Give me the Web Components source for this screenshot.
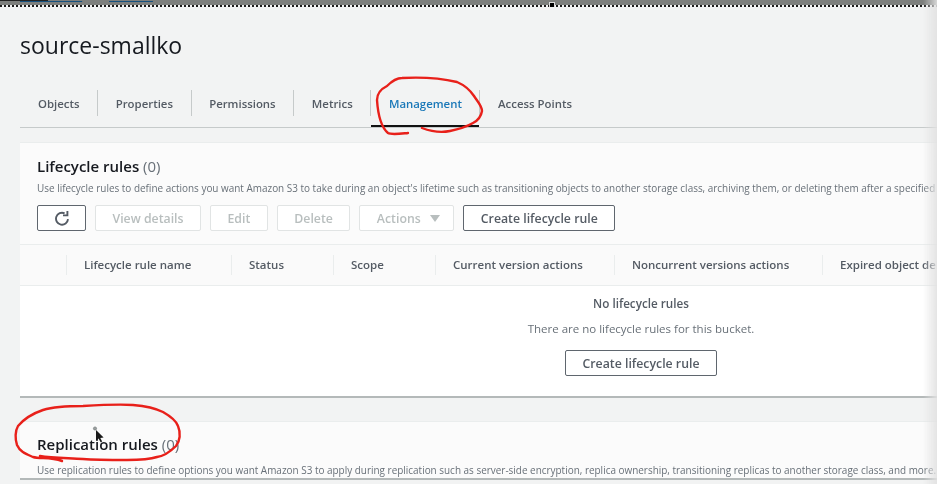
<!DOCTYPE html>
<html>
<head>
<meta charset="utf-8">
<title>source-smallko</title>
<style>
  html, body { margin: 0; height: 100%; overflow: hidden; background: #f2f3f3; }
  body { font-family: "Open Sans", "Noto Sans", sans-serif; color: #16191f; }
</style>
</head>
<body>
<s3-console>
  <top-strip></top-strip>
  <page-title>source-smallko</page-title>
  <s3-tabs items="Objects,Properties,Permissions,Metrics,Management,Access Points" active="Management"></s3-tabs>

  <s3-card heading="Lifecycle rules" count="(0)" description="Use lifecycle rules to define actions you want Amazon S3 to take during an object's lifetime such as transitioning objects to another storage class, archiving them, or deleting them after a specified period of time.">
    <s3-toolbar>
      <s3-button icon="refresh"></s3-button>
      <s3-button disabled>View details</s3-button>
      <s3-button disabled>Edit</s3-button>
      <s3-button disabled>Delete</s3-button>
      <s3-button disabled caret>Actions</s3-button>
      <s3-button>Create lifecycle rule</s3-button>
    </s3-toolbar>
    <table-head></table-head>
    <empty-state heading="No lifecycle rules" text="There are no lifecycle rules for this bucket.">
      <s3-button>Create lifecycle rule</s3-button>
    </empty-state>
  </s3-card>

  <s3-card class="second" heading="Replication rules" count="(0)" description="Use replication rules to define options you want Amazon S3 to apply during replication such as server-side encryption, replica ownership, transitioning replicas to another storage class, and more." link="Learn more"></s3-card>
</s3-console>
<ink-overlay></ink-overlay>

<script>
class S3Console extends HTMLElement {
  constructor() {
    super();
    this.attachShadow({ mode: "open" });
    this.shadowRoot.innerHTML = `
      <style>
        :host {
          display: flex;
          flex-direction: column;
          width: 1262px;
          padding-left: 20px;
          box-sizing: border-box;
          filter: blur(0.35px);
        }
        ::slotted(s3-card) { margin-top: 14px; }
        ::slotted(s3-card.second) {
          margin-top: 23px;
          --head-top: 12px;
          --desc-gap: 8px;
        }
        ::slotted(top-strip) { margin-left: -20px; }
      </style>
      <slot></slot>
    `;
  }
}

class TopStrip extends HTMLElement {
  constructor() {
    super();
    this.attachShadow({ mode: "open" });
    this.shadowRoot.innerHTML = `
      <style>
        :host {
          display: block;
          height: 7px;
          overflow: hidden;
          background: #7d7f7d;
          position: relative;
        }
        .crumbs {
          display: flex;
          gap: 10px;
          padding-left: 20px;
          margin-top: -12px;
          font-size: 12px;
          line-height: 16px;
          color: #33383a;
        }
        a { color: #17517e; text-decoration: underline; }
        .dots {
          position: absolute;
          left: 0;
          right: 0;
          bottom: 0;
          height: 2px;
          background: repeating-linear-gradient(90deg, #1b1b1b 0 2px, #f4f4f4 2px 4px);
        }
        .smudge {
          position: absolute;
          left: 0;
          top: 0;
          width: 48px;
          height: 1px;
          background: #222;
        }
        .handle {
          position: absolute;
          left: 550px;
          top: 3px;
          width: 4px;
          height: 4px;
          background: #000;
          outline: 1px solid #ddd;
        }
      </style>
      <div class="crumbs">
        <a>Amazon S3</a><span>&gt;</span><a>Buckets</a><span>&gt;</span><span>source-smallko</span>
      </div>
      <div class="dots"></div>
      <div class="smudge"></div>
      <div class="handle"></div>
    `;
  }
}

class PageTitle extends HTMLElement {
  constructor() {
    super();
    this.attachShadow({ mode: "open" });
    this.shadowRoot.innerHTML = `
      <style>
        :host {
          display: block;
          padding-top: 24px;
          height: 59px;
          font-size: 23px;
          line-height: 28px;
          color: #16191f;
        }
      </style>
      <slot></slot>
    `;
  }
}

class S3Tabs extends HTMLElement {
  constructor() {
    super();
    this.attachShadow({ mode: "open" });
  }

  connectedCallback() {
    const active = this.getAttribute("active");
    const items = this.getAttribute("items").split(",");
    this.shadowRoot.innerHTML = `
      <style>
        :host {
          display: flex;
          height: 37px;
          border-bottom: 1px solid #c6caca;
          font-size: 11.4px;
          font-weight: 600;
          color: #545b64;
        }
        .tab {
          position: relative;
          display: flex;
          align-items: center;
          height: 26px;
          padding: 0 17.6px;
          border-left: 1px solid #c6caca;
          white-space: nowrap;
        }
        .tab:first-of-type { border-left: 0; padding-left: 18px; }
        .tab.active { color: #1a78b8; }
        .tab.active::after {
          content: "";
          position: absolute;
          left: 0;
          right: 0;
          bottom: -11px;
          height: 2px;
          background: #111;
        }
      </style>
      ${items
        .map((item) => `<div class="tab ${item === active ? "active" : ""}">${item}</div>`)
        .join("")}
    `;
  }
}

class S3Card extends HTMLElement {
  constructor() {
    super();
    this.attachShadow({ mode: "open" });
  }

  connectedCallback() {
    const link = this.getAttribute("link");
    this.shadowRoot.innerHTML = `
      <style>
        :host {
          display: block;
          background: #fbfbfb;
          border-top: 1px solid #eaeded;
          border-bottom: 2px solid #b4b9b9;
        }
        header { padding: var(--head-top, 13px) 17px 0; }
        h2 {
          margin: 0;
          font-size: 15px;
          line-height: 20px;
          font-weight: 600;
          color: #16191f;
        }
        h2 span { font-weight: 400; color: #687078; }
        p {
          margin: var(--desc-gap, 4px) 0 0;
          font-size: 9.945px;
          line-height: 16px;
          color: #687078;
          white-space: nowrap;
        }
        a { color: #1a78b8; }
      </style>
      <header>
        <h2>${this.getAttribute("heading")} <span>${this.getAttribute("count")}</span></h2>
        <p>${this.getAttribute("description")}${link ? ` <a>${link}</a>` : ""}</p>
      </header>
      <slot></slot>
    `;
  }
}

class S3Toolbar extends HTMLElement {
  constructor() {
    super();
    this.attachShadow({ mode: "open" });
    this.shadowRoot.innerHTML = `
      <style>
        :host {
          display: flex;
          gap: 9px;
          padding: 9px 17px 13px;
          border-bottom: 1px solid #eaeded;
        }
      </style>
      <slot></slot>
    `;
  }
}

class S3Button extends HTMLElement {
  constructor() {
    super();
    this.attachShadow({ mode: "open" });
  }

  connectedCallback() {
    const refresh = this.getAttribute("icon") === "refresh";
    this.shadowRoot.innerHTML = `
      <style>
        :host {
          display: inline-flex;
          align-items: center;
          justify-content: center;
          gap: 9px;
          height: 26px;
          padding: 0 16.5px;
          box-sizing: border-box;
          border: 1px solid #5f666e;
          border-radius: 2px;
          background: #fff;
          font-size: 12.3px;
          font-weight: 600;
          color: #545b64;
          white-space: nowrap;
        }
        :host([disabled]) {
          border-color: #e1e4e4;
          color: #b8bebe;
        }
        :host([caret]) { padding-right: 13.6px; }
        :host([icon]) { width: 49px; padding: 0; }
        svg { display: block; }
      </style>
      ${
        refresh
          ? `<svg width="16" height="16" viewBox="0 0 16 16" fill="none" stroke="#545b64" stroke-width="1.9">
               <path d="M14 9.2A6 6 0 1 1 10.6 3.3"/>
               <path d="M13.4 1v4.4H9"/>
             </svg>`
          : `<slot></slot>`
      }
      ${
        this.hasAttribute("caret")
          ? `<svg width="10" height="7" viewBox="0 0 10 7"><path d="M0 0h10L5 7z" fill="#b8bebe"/></svg>`
          : ""
      }
    `;
  }
}

class TableHead extends HTMLElement {
  constructor() {
    super();
    this.attachShadow({ mode: "open" });
    const cols = [
      "",
      "Lifecycle rule name",
      "Status",
      "Scope",
      "Current version actions",
      "Noncurrent versions actions",
      "Expired object delete markers",
    ];
    this.shadowRoot.innerHTML = `
      <style>
        :host {
          display: grid;
          grid-template-columns: 46px 165px 102px 102px 179px 208px 1fr;
          height: 40px;
          align-items: center;
          border-bottom: 1px solid #eaeded;
          font-size: 11.5px;
          font-weight: 600;
          color: #545b64;
          background: #fafafa;
        }
        div {
          height: 20px;
          line-height: 20px;
          padding-left: 17px;
          border-left: 1px solid #eaeded;
          white-space: nowrap;
        }
        div:first-of-type { border-left: 0; }
      </style>
      ${cols.map((col) => `<div>${col}</div>`).join("")}
    `;
  }
}

class EmptyState extends HTMLElement {
  constructor() {
    super();
    this.attachShadow({ mode: "open" });
  }

  connectedCallback() {
    this.shadowRoot.innerHTML = `
      <style>
        :host {
          display: flex;
          flex-direction: column;
          align-items: center;
          padding: 9px 0 20px;
          background: #fff;
          font-size: 11.7px;
          color: #687078;
        }
        strong { font-weight: 600; color: #545b64; line-height: 16px; }
        span { margin-top: 9.5px; line-height: 16px; font-size: 11.5px; }
        .action { margin-top: 13.5px; display: flex; }
      </style>
      <strong>${this.getAttribute("heading")}</strong>
      <span>${this.getAttribute("text")}</span>
      <div class="action"><slot></slot></div>
    `;
  }
}

class InkOverlay extends HTMLElement {
  constructor() {
    super();
    this.attachShadow({ mode: "open" });
    this.shadowRoot.innerHTML = `
      <style>
        :host { position: fixed; inset: 0; display: block; pointer-events: none; }
        .fade {
          position: absolute;
          top: 0;
          right: 0;
          bottom: 0;
          width: 14px;
          background: linear-gradient(90deg, rgba(225,225,225,0), rgba(225,225,225,.9));
        }
        svg { position: absolute; left: 0; top: 0; filter: blur(0.3px); }
      </style>
      <div class="fade"></div>
      <svg width="937" height="484" viewBox="0 0 937 484" fill="none">
        <path stroke="#e8201a" stroke-width="2.4" stroke-linecap="round" stroke-linejoin="round"
          d="M408 133C398 134 391 135 388 133C382 128 378 115 377 100C377 93 381 89 387 86C392 81 396 78 402 78C420 77 440 78 457 82C464 85 470 90 474 96C478 102 482 106 482 111C481 117 477 121 473 123C466 127 460 129 450 131C440 133 430 131 422 128"/>
        <path stroke="#e8201a" stroke-width="2.4" stroke-linecap="round" stroke-linejoin="round"
          d="M62 461C50 457 40 459 33 457C26 454 20 452 17 445C15 439 15 431 18 426C24 419 34 413 43 410C56 406 70 406 83 406C100 405 118 404 133 405C145 406 155 408 163 412C170 416 176 420 178 426C181 433 180 441 176 446C170 452 164 456 157 457C148 460 138 460 127 460C110 460 96 460 83 459C68 458 52 458 40 456"/>
        <circle cx="95" cy="428.5" r="1.6" fill="#9aa0a0" stroke="#6a6f6f" stroke-width=".6"/>
        <path d="M96 430l0 11 2.6-2.4 2 3.6 1.6-.8-1.9-3.5 3.3-.3z" fill="#1a1a1a"/>
      </svg>
    `;
  }
}

customElements.define("s3-console", S3Console);
customElements.define("top-strip", TopStrip);
customElements.define("page-title", PageTitle);
customElements.define("s3-tabs", S3Tabs);
customElements.define("s3-card", S3Card);
customElements.define("s3-toolbar", S3Toolbar);
customElements.define("s3-button", S3Button);
customElements.define("table-head", TableHead);
customElements.define("empty-state", EmptyState);
customElements.define("ink-overlay", InkOverlay);
</script>
</body>
</html>
